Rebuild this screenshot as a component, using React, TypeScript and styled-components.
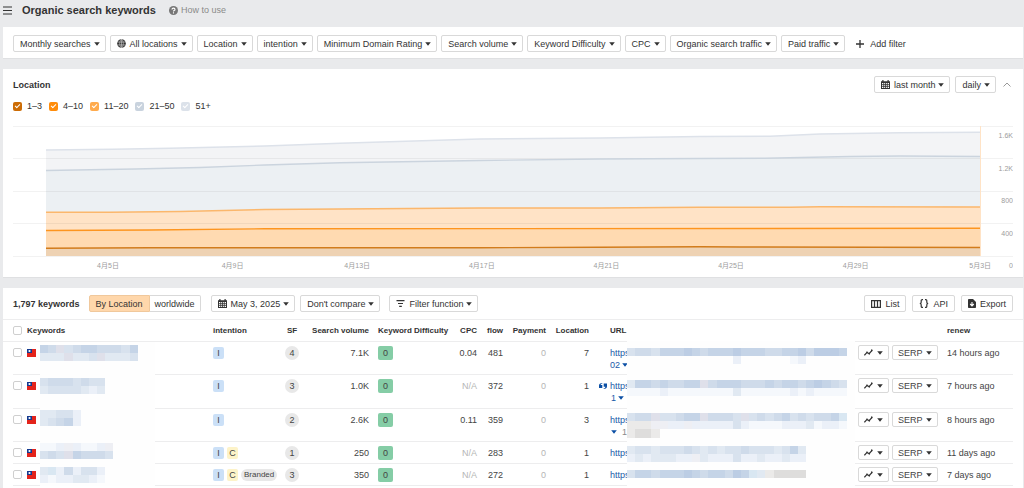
import React from 'react';
import styled, { createGlobalStyle, css } from 'styled-components';

const GlobalStyle = createGlobalStyle`
  *, *::before, *::after { box-sizing: border-box; }
  body {
    margin: 0;
    background: #e9eaec;
    color: #333;
    font: 9px/12px "Liberation Sans", Arial, "Noto Sans CJK SC", sans-serif;
  }
  button, input { font: inherit; color: inherit; margin: 0; }
`;

const Page = styled.div`
  min-height: 100vh;
  display: flex;
  flex-direction: column;
  gap: 10px;
  padding: 0 1px 0 3px;
`;

const TopBar = styled.header`
  display: flex;
  align-items: center;
  height: 20px;
  margin-bottom: -3px;
`;

const MenuButton = styled.button`
  display: flex;
  width: 19px;
  padding: 0;
  border: 0;
  background: none;
`;

const Title = styled.h1`
  margin: 0 13px 0 0;
  font-size: 11px;
  line-height: 20px;
`;

const HelpLink = styled.a`
  display: flex;
  align-items: center;
  gap: 3px;
  color: #8a8a8a;
  text-decoration: none;
`;

const Card = styled.section<{ $grow?: boolean }>`
  background: #fff;
  border-bottom: 1px solid #dfe0e2;
  ${(p) => p.$grow && css`flex: 1; border-bottom: 0;`}
`;

const FilterRow = styled.div`
  display: flex;
  flex-wrap: wrap;
  align-items: center;
  gap: 4px;
  padding: 8px 10px 6px;
`;

const Button = styled.button`
  display: inline-flex;
  align-items: center;
  gap: 4px;
  height: 17px;
  padding: 0 6px;
  border: 1px solid #d9d9d9;
  border-radius: 2px;
  background: #fff;
  white-space: nowrap;
  svg { flex: none; }
  &[aria-haspopup] { gap: 3px; padding-right: 5px; }
  svg:first-child:not(:last-child) { margin-right: 1px; }
`;

const PlainButton = styled(Button)`
  border-color: transparent;
  gap: 6px;
`;

const BarRow = styled.div`
  display: flex;
  align-items: center;
  padding: 7px 10px;
  height: 31px;
`;

const Group = styled.div<{ $end?: boolean; $gap: number }>`
  display: flex;
  align-items: center;
  gap: ${(p) => p.$gap}px;
  ${(p) => p.$end && css`margin-left: auto;`}
`;

const Heading = styled.h2`
  margin: 0;
  font-size: 9px;
  line-height: 12px;
`;

const Collapse = styled.button`
  display: flex;
  padding: 0 2px;
  border: 0;
  background: none;
`;

const Legend = styled.div`
  display: flex;
  gap: 7px;
  padding: 0 10px;
`;

const LegendItem = styled.label`
  display: flex;
  align-items: center;
  gap: 5px;
`;

const Tick = styled.input<{ $color: string }>`
  appearance: none;
  display: grid;
  place-items: center;
  width: 9px;
  height: 9px;
  border-radius: 2px;
  background: ${(p) => p.$color};
  &::after {
    content: '';
    width: 5px;
    height: 3px;
    margin-bottom: 2px;
    border: solid #fff;
    border-width: 0 0 1px 1px;
    transform: rotate(-45deg);
  }
`;

const ChartBox = styled.div`
  padding: 8px 10px 0;
  svg { display: block; width: 100%; height: auto; }
  text { font-size: 7px; fill: #9c9c9c; }
`;

const Segment = styled.div`
  display: flex;
  margin: 0 10px 0 9px;
`;

const SegmentButton = styled(Button)<{ $active?: boolean }>`
  padding: 0 ${(p) => (p.$active ? 6 : 5)}px;
  border-radius: ${(p) => (p.$active ? '2px 0 0 2px' : '0 2px 2px 0')};
  ${(p) => (p.$active ? css`background: #ffd7ab; border-color: #f0c89c;` : css`border-left: 0;`)}
`;

const Table = styled.table`
  width: 100%;
  table-layout: fixed;
  border-collapse: separate;
  border-spacing: 0;
`;

type CellProps = { $align?: 'left' | 'right' | 'center'; $muted?: boolean; $pad?: number };

const Th = styled.th<CellProps>`
  height: 23px;
  padding: 0 0 0 ${(p) => p.$pad ?? 0}px;
  border: solid #ededee;
  border-width: 1px 0;
  font-size: 8px;
  line-height: 12px;
  white-space: nowrap;
  text-align: ${(p) => p.$align ?? 'left'};
`;

const Td = styled.td<CellProps>`
  position: relative;
  padding: 4px 0 0 ${(p) => p.$pad ?? 0}px;
  vertical-align: top;
  line-height: 14px;
  white-space: nowrap;
  text-align: ${(p) => p.$align ?? 'left'};
  color: ${(p) => (p.$muted ? '#b5b5b5' : '#444')};
  background: linear-gradient(#ededee, #ededee) right bottom / 100% 1px no-repeat;
  &:first-child { background-size: calc(100% - 10px) 1px; }
  &:last-child { background-position: left bottom; background-size: calc(100% - 10px) 1px; }
`;

const Row = styled.tr<{ $height: number }>`
  height: ${(p) => p.$height}px;
`;

const Check = styled.input`
  appearance: none;
  display: block;
  width: 9px;
  height: 9px;
  border: 1px solid #cfcfcf;
  border-radius: 2px;
  background: #fff;
`;

const CheckCell = styled(Td)`
  padding-top: 6px;
`;

const FlagBox = styled.div`
  display: flex;
  align-items: center;
  height: 14px;
`;

const Tags = styled.div`
  display: flex;
  align-items: center;
  gap: 3px;
  height: 14px;
`;

const Tag = styled.span<{ $kind: string }>`
  padding: 0 ${(p) => (p.$kind === 'Branded' ? 3 : 0)}px;
  min-width: 11px;
  border-radius: ${(p) => (p.$kind === 'Branded' ? 6 : 2)}px;
  background: ${(p) => (p.$kind === 'I' ? '#cbe0f7' : p.$kind === 'C' ? '#fdf3c8' : '#e8e8e8')};
  font-size: ${(p) => (p.$kind === 'Branded' ? 8 : 9)}px;
  line-height: 12px;
  text-align: center;
`;

const Count = styled.span`
  display: inline-block;
  width: 14px;
  border-radius: 7px;
  background: #e8e8e8;
  text-align: center;
`;

const Score = styled.span`
  display: inline-block;
  width: 15px;
  border-radius: 2px;
  background: #85cda6;
  text-align: center;
`;

const UrlLink = styled.a`
  display: block;
  color: #1a5aa8;
  text-decoration: none;
`;

const UrlMore = styled.div<{ $indent: number }>`
  display: flex;
  align-items: center;
  gap: 2px;
  height: 10px;
  padding-left: ${(p) => p.$indent}px;
  line-height: 10px;
  color: #1a5aa8;
  span { color: #8a8a8a; padding-left: 3px; }
`;

const QuoteMark = styled.span`
  position: absolute;
  left: 10px;
  top: 8px;
  display: flex;
`;

const Veil = styled.div<{ $left: number; $width: number; $above?: boolean }>`
  position: absolute;
  left: ${(p) => p.$left}px;
  top: ${(p) => (p.$above ? -1 : 0)}px;
  bottom: 0;
  width: ${(p) => p.$width}px;
  background: #fefefe;
`;

const MosaicSvg = styled.svg<{ $top: number }>`
  display: block;
  margin-top: ${(p) => p.$top}px;
`;

const ActionCell = styled(Td)`
  padding-top: 3px;
  line-height: 0;
`;

const SmallButton = styled(Button)`
  height: 15px;
  padding: 0 5px;
`;

const Caret = ({ color = '#333' }: { color?: string }) => (
  <svg width="6" height="4" viewBox="0 0 6 4" aria-hidden="true">
    <path d="M0.2 0.3h5.6L3 3.8z" fill={color} />
  </svg>
);

const Globe = () => (
  <svg width="9" height="9" viewBox="0 0 10 10" aria-hidden="true">
    <circle cx="5" cy="5" r="4.8" fill="#333" />
    <g fill="none" stroke="#fff" strokeWidth="0.5">
      <ellipse cx="5" cy="5" rx="2" ry="4.4" />
      <path d="M5 .6v8.8M.6 3.4h8.8M.6 6.6h8.8" />
    </g>
  </svg>
);

const Calendar = () => (
  <svg width="9" height="9" viewBox="0 0 9 9" aria-hidden="true">
    <path d="M0 1.2h1.3V0h1.2v1.2h4V0h1.2v1.2H9V9H0z" fill="#333" />
    <path d="M1 3h7v5H1z" fill="#fff" />
    <path d="M1 4.6h7M1 6.4h7M2.7 3v5M4.5 3v5M6.3 3v5" stroke="#333" strokeWidth="0.8" />
  </svg>
);

const Plus = () => (
  <svg width="8" height="8" viewBox="0 0 8 8" aria-hidden="true">
    <path d="M4 0v8M0 4h8" stroke="#333" strokeWidth="1.3" />
  </svg>
);

const Columns = () => (
  <svg width="10" height="8" viewBox="0 0 10 8" aria-hidden="true">
    <path d="M.6.6h8.8v6.8H.6zM3.5.6v6.8M6.5.6v6.8" fill="none" stroke="#333" strokeWidth="1.2" />
  </svg>
);

const Braces = () => (
  <svg width="10" height="9" viewBox="0 0 10 9" aria-hidden="true">
    <path
      d="M4 .6H3.2Q2.2.6 2.2 1.6v1.6Q2.2 4.5.8 4.5 2.2 4.5 2.2 5.8v1.6q0 1 1 1H4M6 .6h.8q1 0 1 1v1.6q0 1.3 1.4 1.3-1.4 0-1.4 1.3v1.6q0 1-1 1H6"
      fill="none" stroke="#333" strokeWidth="1.2"
    />
  </svg>
);

const ExportIcon = () => (
  <svg width="8" height="9" viewBox="0 0 8 9" aria-hidden="true">
    <path d="M.8 0H5l3 3v5.2q0 .8-.8.8H.8Q0 9 0 8.2V.8Q0 0 .8 0z" fill="#333" />
    <path d="M4 3v3.6M2.2 5L4 6.9 5.8 5" fill="none" stroke="#fff" strokeWidth="1.1" />
  </svg>
);

const FilterIcon = () => (
  <svg width="9" height="7" viewBox="0 0 9 7" aria-hidden="true">
    <path d="M.5.7h8M2 3.5h5M3.2 6.3h2.6" stroke="#333" strokeWidth="1.2" />
  </svg>
);

const TrendIcon = () => (
  <svg width="9" height="7" viewBox="0 0 9 7" aria-hidden="true">
    <path d="M.4 6.3L3 3.4 5.2 4.7 8.4.8" fill="none" stroke="#333" strokeWidth="1.2" />
    <path d="M3 2.6v1.6M5.3 3.8v1.7M7.6.6v1.8" stroke="#333" strokeWidth="1.1" />
  </svg>
);

const Flag = () => (
  <svg width="9" height="8" viewBox="0 0 9 8" role="img" aria-label="Taiwan">
    <rect width="9" height="8" fill="#e3231b" />
    <rect width="5" height="4" fill="#153a8f" />
    <circle cx="2.5" cy="2" r="1.1" fill="#fff" />
  </svg>
);

const Quotes = () => (
  <svg width="8" height="6" viewBox="0 0 8 6" aria-hidden="true">
    <path d="M3.4.4Q1.6.6 1.6 2h1.7v3H0V2.6Q0 .2 3.4 0zM4.6 5.6Q6.4 5.4 6.4 3.8H4.7V.6H8v2.6Q8 5.8 4.6 6z" fill="#0b4fa5" />
  </svg>
);

const filters = [
  'Monthly searches', 'All locations', 'Location', 'intention', 'Minimum Domain Rating',
  'Search volume', 'Keyword Difficulty', 'CPC', 'Organic search traffic', 'Paid traffic',
];

const legend = [
  ['1–3', '#cc6c05'], ['4–10', '#ff8c0a'], ['11–20', '#ffab4d'], ['21–50', '#c9d3de'], ['51+', '#dce2ea'],
];

type Series = { line: string; fill: string; points: [number, number][] };

/* Upper edge of every stacked band, top band first. */
const series: Series[] = [
  { line: '#dde2ea', fill: '#f3f4f6', points: [[33, 30], [100, 29.3], [157, 28.3], [252, 26], [327, 23.2], [467, 19], [587, 18], [687, 16.5], [757, 16.3], [807, 14], [887, 12.8], [967, 12.3]] },
  { line: '#cbd4de', fill: '#ecf0f3', points: [[33, 50.5], [122, 49], [187, 47.5], [252, 45], [327, 42.7], [467, 40.5], [587, 39], [687, 38.5], [752, 38.3], [837, 36.5], [887, 36], [967, 36.5]] },
  { line: '#fbb76c', fill: '#ffe3c6', points: [[33, 92.2], [97, 92.2], [167, 91.5], [252, 89.5], [327, 89], [467, 88], [587, 88], [687, 87.3], [777, 87.3], [807, 86.8], [967, 87]] },
  { line: '#fd951f', fill: '#ffdab1', points: [[33, 110.5], [137, 110], [252, 108.8], [967, 108.3]] },
  { line: '#d27c1c', fill: '#eed2b3', points: [[33, 128.3], [137, 127.7], [467, 127.7], [587, 127.3], [687, 126.7], [727, 127], [967, 127.5]] },
];

const dates = ['4月5日', '4月9日', '4月13日', '4月17日', '4月21日', '4月25日', '4月29日', '5月3日'];
const scale = ['1.6K', '1.2K', '800', '400', '0'];
const path = (points: [number, number][]) => points.map(([x, y]) => `${x} ${y}`).join('L');

const Chart = () => (
  <svg viewBox="0 0 1000 157" role="img" aria-label="Keywords by position over the last month">
    {series.map((s) => (
      <path key={s.line} d={`M${path(s.points)}V136H33z`} fill={s.fill} />
    ))}
    {[6, 38, 71, 103, 136].map((y) => (
      <rect key={y} y={y} width="1000" height="1" fill="#000" opacity="0.05" />
    ))}
    {series.map((s) => (
      <path key={s.line} d={`M${path(s.points)}`} fill="none" stroke={s.line} strokeWidth="1.4" />
    ))}
    <rect x="967" y="6" width="1" height="130" fill="#ffe3c6" />
    {dates.map((d, i) => (
      <text key={d} x={95 + i * 124.6} y="148" textAnchor="middle">{d}</text>
    ))}
    {scale.map((s, i) => (
      <text key={s} x="1000" y={18 + i * 32.5} textAnchor="end">{s}</text>
    ))}
  </svg>
);

/* Each letter is a shade of a masked cell; a dot leaves the cell empty. */
const shades: Record<string, string> = {
  a: '#bccde4', b: '#c5d4e7', c: '#cfdbea', d: '#d8e2ee', e: '#e1e9f2', f: '#ebf0f8', g: '#f5f8fc',
  h: '#dfe0ea', i: '#eeeff4', j: '#dedddc', k: '#ebeae9', l: '#d9e7f2',
};
const CELL = 8.14;

const Mosaic = ({ rows, top }: { rows: string[]; top: number }) => (
  <MosaicSvg $top={top} width={Math.ceil(rows[0].length * CELL)} height={rows.length * 8 + 1} shapeRendering="crispEdges" aria-hidden="true">
    {rows.flatMap((row, y) =>
      [...row].map((c, x) =>
        shades[c] ? <rect key={`${x}-${y}`} x={x * CELL} y={y * 8.2} width={CELL} height="8.2" fill={shades[c]} /> : null,
      ),
    )}
  </MosaicSvg>
);

type Item = {
  height: number; tags: string[]; sf: number; volume: string; cpc: string; flow: number; position: number;
  more?: { indent: number; before?: string; after?: string }; quoted?: boolean; renew: string;
  name: string[]; nameTop: number; url: string[]; urlTop: number;
};

const items: Item[] = [
  {
    height: 33, tags: ['I'], sf: 4, volume: '7.1K', cpc: '0.04', flow: 481, position: 7, more: { indent: 0, before: '02' }, renew: '14 hours ago',
    name: ['bchdcbbcccdb', 'eeeheedheeed'], nameTop: 4, url: ['dccdbbbabcbbbabbbccbbacaaab', '.............f......gf.....'], urlTop: 7,
  },
  {
    height: 34, tags: ['I'], sf: 3, volume: '1.0K', cpc: 'N/A', flow: 372, position: 1, more: { indent: 1, before: '1' }, quoted: true, renew: '7 hours ago',
    name: ['dcccdcdd', 'eddddefe'], nameTop: 4, url: ['ebbcbccbbhcbbbcccbcbbcbabcd', 'ggggfggggggggeggggggfgfgggg'], urlTop: 6,
  },
  {
    height: 33, tags: ['I'], sf: 2, volume: '2.6K', cpc: '0.11', flow: 359, position: 3, more: { indent: 1, after: '1' }, renew: '8 hours ago',
    name: ['eeddf', 'edcbf'], nameTop: 2, url: ['dcchddcbbhcccdhdcdcbdcdccbl', 'kkkiiffifffffdfggggfffegffg', 'kjjk.......................'], urlTop: 5,
  },
  {
    height: 22, tags: ['I', 'C'], sf: 1, volume: '250', cpc: 'N/A', flow: 283, position: 1, renew: '11 days ago',
    name: ['ggfifggfi', 'dcdhbcccd'], nameTop: 2, url: ['eddedddcdededdcdddedbe', 'fefeeeffiefffdffeffeff'], urlTop: 5,
  },
  {
    height: 22, tags: ['I', 'C', 'Branded'], sf: 3, volume: '350', cpc: 'N/A', flow: 272, position: 1, renew: '7 days ago',
    name: ['elfcfddf', 'fgffeefg'], nameTop: 4, url: ['dbbcbbbabcbbcablekjjjj'], urlTop: 7,
  },
];

const widths = ['24px', '186px', '67px', '24px', '65px', '81px', '27px', '26px', '43px', '43px', 'auto', '34px', '55px', '76px'];

export default function App() {
  return (
    <Page>
      <GlobalStyle />
      <TopBar>
        <MenuButton aria-label="Menu">
          <svg width="9" height="9" viewBox="0 0 9 9"><path d="M0 1h9M0 4.5h9M0 8h9" stroke="#333" strokeWidth="1.2" /></svg>
        </MenuButton>
        <Title>Organic search keywords</Title>
        <HelpLink href="#help">
          <svg width="9" height="9" viewBox="0 0 9 9" aria-hidden="true">
            <circle cx="4.5" cy="4.5" r="4.5" fill="#777" />
            <path d="M3 3.5Q3 2.1 4.5 2.1T6 3.4Q6 4.1 5.1 4.5 4.5 4.8 4.5 5.5M4.5 6.3v1.1" fill="none" stroke="#fff" strokeWidth="1.1" />
          </svg>
          How to use
        </HelpLink>
      </TopBar>

      <Card>
        <FilterRow>
          {filters.map((f) => (
            <Button key={f} aria-haspopup="true">
              {f === 'All locations' && <Globe />}
              {f}
              <Caret />
            </Button>
          ))}
          <PlainButton><Plus />Add filter</PlainButton>
        </FilterRow>
      </Card>

      <Card>
        <BarRow>
          <Heading>Location</Heading>
          <Group $end $gap={5}>
            <Button aria-haspopup="true"><Calendar />last month<Caret /></Button>
            <Button aria-haspopup="true">daily<Caret /></Button>
            <Collapse aria-label="Collapse chart">
              <svg width="8" height="5" viewBox="0 0 8 5"><path d="M.5 4.5L4 1l3.5 3.5" fill="none" stroke="#999" /></svg>
            </Collapse>
          </Group>
        </BarRow>
        <Legend>
          {legend.map(([name, color]) => (
            <LegendItem key={name}><Tick type="checkbox" defaultChecked $color={color} />{name}</LegendItem>
          ))}
        </Legend>
        <ChartBox><Chart /></ChartBox>
      </Card>

      <Card $grow>
        <BarRow>
          <Heading>1,797 keywords</Heading>
          <Segment>
            <SegmentButton $active aria-pressed="true">By Location</SegmentButton>
            <SegmentButton aria-pressed="false">worldwide</SegmentButton>
          </Segment>
          <Group $gap={5}>
            <Button aria-haspopup="true"><Calendar />May 3, 2025<Caret /></Button>
            <Button aria-haspopup="true">Don't compare<Caret /></Button>
          </Group>
          <Segment>
            <Button aria-haspopup="true"><FilterIcon />Filter function<Caret /></Button>
          </Segment>
          <Group $end $gap={6}>
            <Button><Columns />List</Button>
            <Button><Braces />API</Button>
            <Button><ExportIcon />Export</Button>
          </Group>
        </BarRow>
        <Table>
          <colgroup>{widths.map((w, i) => <col key={i} style={{ width: w }} />)}</colgroup>
          <thead>
            <tr>
              <Th $pad={10}><Check type="checkbox" aria-label="Select all" /></Th>
              <Th>Keywords</Th>
              <Th>intention</Th>
              <Th $align="center">SF</Th>
              <Th $align="right">Search volume</Th>
              <Th $pad={9}>Keyword Difficulty</Th>
              <Th $align="right">CPC</Th>
              <Th $align="right">flow</Th>
              <Th $align="right">Payment</Th>
              <Th $align="right">Location</Th>
              <Th $pad={21}>URL</Th>
              <Th /><Th />
              <Th>renew</Th>
            </tr>
          </thead>
          <tbody>
            {items.map((k, i) => (
              <Row key={i} $height={k.height}>
                <CheckCell $pad={10}><Check type="checkbox" aria-label={`Select row ${i + 1}`} /></CheckCell>
                <Td>
                  <FlagBox><Flag /></FlagBox>
                  <Veil $left={13} $width={115}><Mosaic rows={k.name} top={k.nameTop - 1} /></Veil>
                </Td>
                <Td><Tags>{k.tags.map((t) => <Tag key={t} $kind={t}>{t}</Tag>)}</Tags></Td>
                <Td $align="center"><Count>{k.sf}</Count></Td>
                <Td $align="right">{k.volume}</Td>
                <Td $pad={9}><Score>0</Score></Td>
                <Td $align="right" $muted={k.cpc === 'N/A'}>{k.cpc}</Td>
                <Td $align="right">{k.flow}</Td>
                <Td $align="right" $muted>0</Td>
                <Td $align="right">{k.position}</Td>
                <Td $pad={21}>
                  {k.quoted && <QuoteMark><Quotes /></QuoteMark>}
                  <UrlLink href="#url">https</UrlLink>
                  {k.more && (
                    <UrlMore $indent={k.more.indent}>
                      {k.more.before}<Caret color="#0b4fa5" />{k.more.after && <span>{k.more.after}</span>}
                    </UrlMore>
                  )}
                  <Veil $left={38} $width={228} $above><Mosaic rows={k.url} top={k.urlTop} /></Veil>
                </Td>
                <ActionCell><SmallButton aria-label="History" aria-haspopup="true"><TrendIcon /><Caret /></SmallButton></ActionCell>
                <ActionCell><SmallButton aria-haspopup="true">SERP<Caret /></SmallButton></ActionCell>
                <Td>{k.renew}</Td>
              </Row>
            ))}
          </tbody>
        </Table>
      </Card>
    </Page>
  );
}
